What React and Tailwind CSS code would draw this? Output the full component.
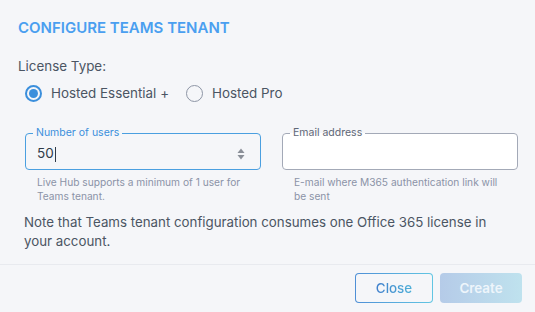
import React, { useState } from "react";

const Radio = ({ checked, label, onClick }) => (
  <label className="flex items-center gap-[9px] cursor-pointer" onClick={onClick}>
    <span
      className={
        checked
          ? "w-[17px] h-[17px] rounded-full border-2 border-[#3b8fdc] flex items-center justify-center"
          : "w-[17px] h-[17px] rounded-full border-[1.5px] border-[#8d95a5]"
      }
    >
      {checked && <span className="w-[9px] h-[9px] rounded-full bg-[#3b8fdc]" />}
    </span>
    <span className="text-[13.4px] text-[#4b5563]">{label}</span>
  </label>
);

const App = () => {
  const [license, setLicense] = useState("essential");

  return (
    <div className="w-[535px] h-[312px] bg-[#f5f6f9] font-['Inter',sans-serif] overflow-hidden">
      <div className="px-[18px] pt-[19px]">
        <h2 className="text-[15px] leading-[18px] font-semibold text-[#4a9ff0]">
          CONFIGURE TEAMS TENANT
        </h2>
        <p className="mt-[20px] text-[13.4px] leading-[18px] text-[#4b5563]">License Type:</p>
        <div className="mt-[8px] pl-[7px] flex items-center gap-[17px] h-[20px]">
          <Radio
            checked={license === "essential"}
            label="Hosted Essential +"
            onClick={() => setLicense("essential")}
          />
          <Radio
            checked={license === "pro"}
            label="Hosted Pro"
            onClick={() => setLicense("pro")}
          />
        </div>

        <div className="mt-[24px] pl-[7px] grid grid-cols-[236px_236px] gap-x-[21px]">
          <div>
            <fieldset className="h-[43px] border border-[#4a9fe0] rounded-[4px] px-[7px] m-0">
              <legend className="px-[3px] text-[10.5px] leading-[12px] text-[#3b8fdc]">
                Number of users
              </legend>
              <div className="flex items-center justify-between h-[29px] pl-[4px] pr-[8px]">
                <span className="text-[13.5px] text-[#2f3a48]">
                  50<span className="inline-block w-px h-[15px] bg-[#2f3a48] align-middle ml-px" />
                </span>
                <svg width="8" height="12" viewBox="0 0 8 12">
                  <path d="M4 0.5 L7.5 5 L0.5 5 Z" fill="#8a8f98" />
                  <path d="M4 11.5 L7.5 7 L0.5 7 Z" fill="#8a8f98" />
                </svg>
              </div>
            </fieldset>
            <p className="mt-[5px] pl-[12px] pr-[8px] text-[10.2px] leading-[14px] text-[#8b93a7]">
              Live Hub supports a minimum of 1 user for Teams tenant.
            </p>
          </div>
          <div>
            <fieldset className="h-[43px] border border-[#a3a9b7] rounded-[4px] px-[7px] m-0 bg-white">
              <legend className="px-[3px] text-[10.5px] leading-[12px] text-[#5f6776]">
                Email address
              </legend>
            </fieldset>
            <p className="mt-[5px] pl-[12px] pr-[18px] text-[10.2px] leading-[14px] text-[#8b93a7]">
              E-mail where M365 authentication link will be sent
            </p>
          </div>
        </div>

        <p className="mt-[10px] pl-[6px] pr-[30px] text-[13.3px] leading-[19px] text-[#4b5563]">
          Note that Teams tenant configuration consumes one Office 365 license in your account.
        </p>
      </div>

      <div className="mt-[13px] border-t border-[#e8eaef]" />

      <div className="flex justify-end gap-[7px] pt-[8px] pr-[13px]">
        <button className="w-[78px] h-[30px] rounded-[4px] p-px bg-gradient-to-r from-[#4f8fd6] to-[#62c6e3]">
          <span className="flex items-center justify-center w-full h-full rounded-[3px] bg-[#f5f6f9]">
            <span className="text-[13.4px] font-medium bg-gradient-to-r from-[#3f7fcc] to-[#4fb0d8] bg-clip-text text-transparent">
              Close
            </span>
          </span>
        </button>
        <button className="w-[82px] h-[30px] rounded-[4px] bg-gradient-to-r from-[#b5cbe8] to-[#bfe2ee] text-[13.4px] font-semibold text-[#eef5fb]">
          Create
        </button>
      </div>
    </div>
  );
};

export default App;
